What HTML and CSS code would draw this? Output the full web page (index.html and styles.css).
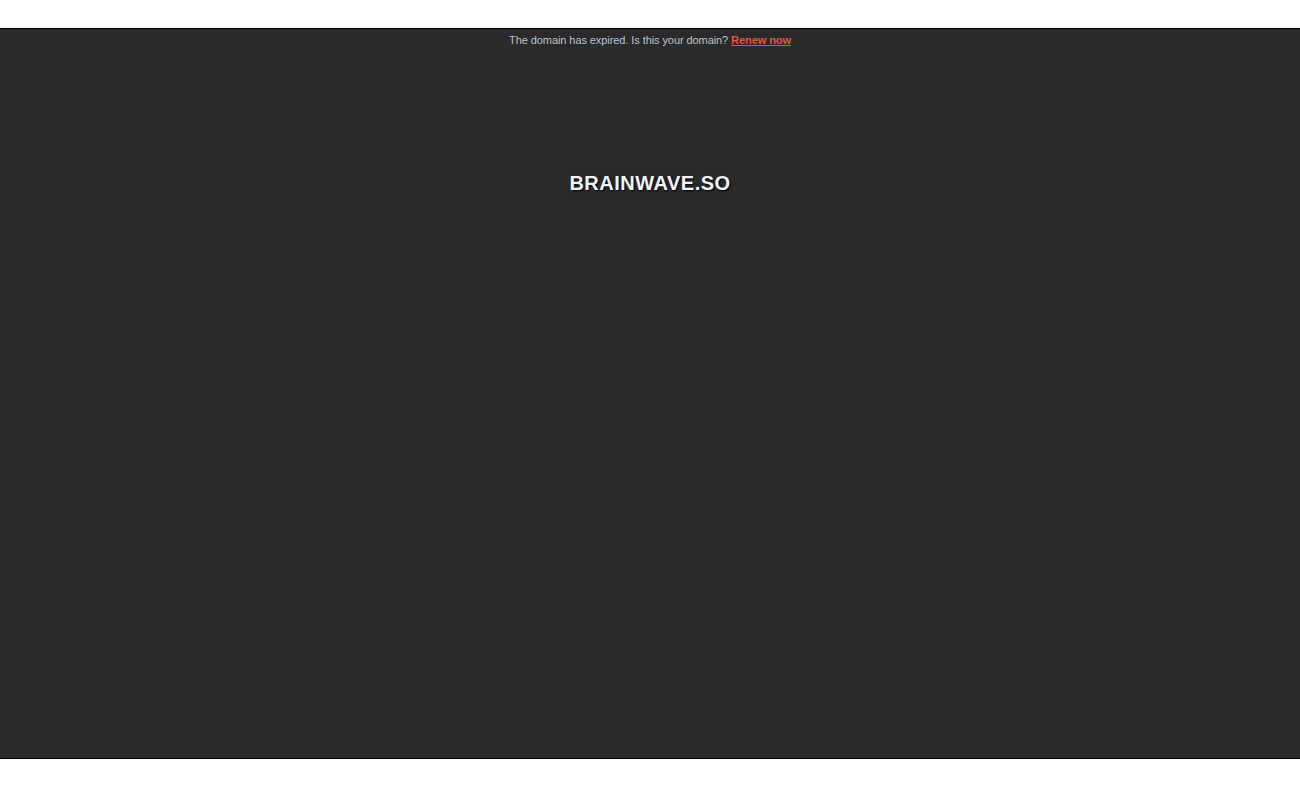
FILE: index.html
```html
<!DOCTYPE html>
<html>
<head>
<meta charset="utf-8">
<link rel="stylesheet" href="styles.css">
</head>
<body>
<div class="page">
  <div class="frame">
    <p class="notice">The domain has expired. Is this your domain? <a href="#" class="renew">Renew now</a></p>
    <h1 class="title">BRAINWAVE.SO</h1>
  </div>
</div>
</body>
</html>
```

FILE: styles.css
```css
html, body { margin: 0; padding: 0; background: #fff; }
.page { padding-top: 28px; }
.frame {
  background: #2a2a2a;
  border-top: 1px solid #000;
  border-bottom: 1px solid #000;
  box-sizing: border-box;
  height: 731px;
  font-family: "Liberation Sans", Arial, sans-serif;
  text-align: center;
  padding-top: 5px;
}
.notice {
  margin: 0;
  font-size: 11px;
  line-height: 13px;
  color: #b9c3cc;
  letter-spacing: -0.08px;
}
.renew {
  color: #ef4f36;
  font-weight: bold;
}
.title {
  margin: 124px 0 0;
  font-size: 20px;
  line-height: 24px;
  font-weight: bold;
  color: #eef4f8;
  letter-spacing: 0.5px;
  text-shadow: 1px 1px 2px #000;
}
```
